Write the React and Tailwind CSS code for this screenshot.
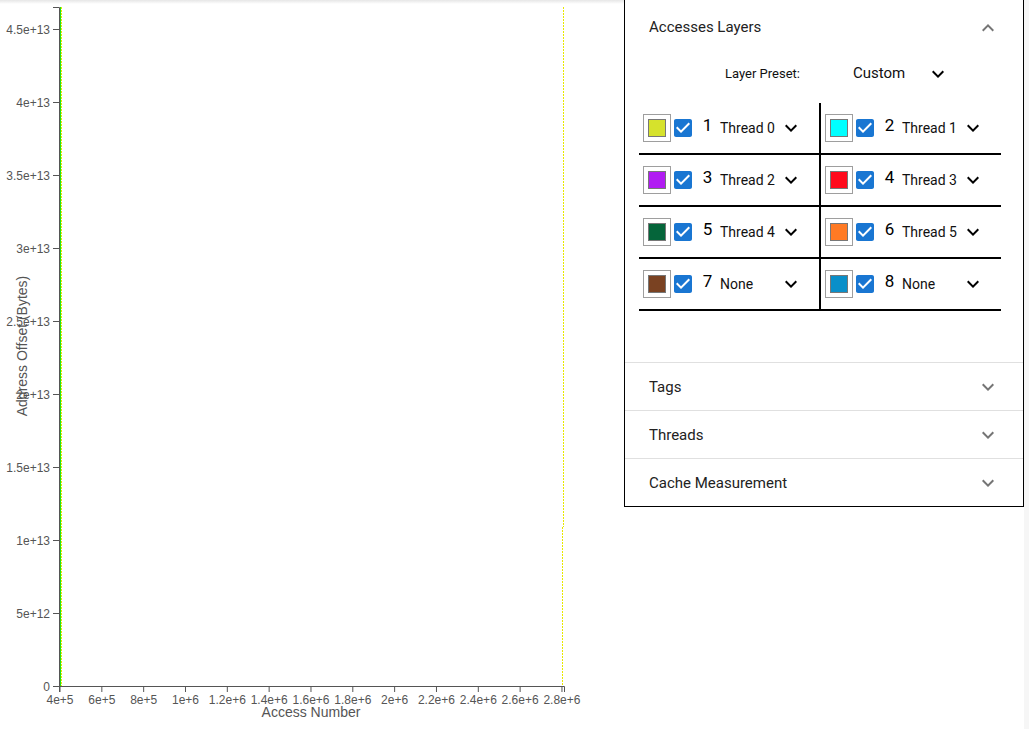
import React from 'react';

const layers = [
  { n: 1, color: '#d6e22c', label: 'Thread 0' },
  { n: 2, color: '#00ffff', label: 'Thread 1' },
  { n: 3, color: '#b11cf2', label: 'Thread 2' },
  { n: 4, color: '#ff0a1c', label: 'Thread 3' },
  { n: 5, color: '#05653a', label: 'Thread 4' },
  { n: 6, color: '#ff7a24', label: 'Thread 5' },
  { n: 7, color: '#7a4222', label: 'None' },
  { n: 8, color: '#0a8fc9', label: 'None' }
];

const yTicks = ['4.5e+13', '4e+13', '3.5e+13', '3e+13', '2.5e+13', '2e+13', '1.5e+13', '1e+13', '5e+12', '0'];
const xTicks = ['4e+5', '6e+5', '8e+5', '1e+6', '1.2e+6', '1.4e+6', '1.6e+6', '1.8e+6', '2e+6', '2.2e+6', '2.4e+6', '2.6e+6', '2.8e+6'];

function Chevron({ up = false, className = '' }) {
  return (
    <svg viewBox="0 0 24 24" className={`h-6 w-6 shrink-0 ${className}`} fill="currentColor" aria-hidden="true">
      {up ? (
        <path d="M12 8l-6 6 1.41 1.41L12 10.83l4.59 4.58L18 14z" />
      ) : (
        <path d="M16.59 8.59 12 13.17 7.41 8.59 6 10l6 6 6-6z" />
      )}
    </svg>
  );
}

function CheckIcon() {
  return (
    <svg viewBox="0 0 24 24" className="h-6 w-6 shrink-0 text-[#1976d2]" fill="currentColor" aria-hidden="true">
      <path d="M19 3H5c-1.11 0-2 .9-2 2v14c0 1.1.89 2 2 2h14c1.11 0 2-.9 2-2V5c0-1.1-.89-2-2-2zm-9 14l-5-5 1.41-1.41L10 14.17l7.59-7.59L19 8l-9 9z" />
    </svg>
  );
}

function Chart() {
  const font = { fontFamily: '"Liberation Sans", Arial, sans-serif' };
  return (
    <svg width="624" height="729" className="block shrink-0" style={font}>
      <defs>
        <linearGradient id="topShade" x1="0" y1="0" x2="0" y2="1">
          <stop offset="0" stopColor="#e6e6e6" />
          <stop offset="1" stopColor="#ffffff" />
        </linearGradient>
      </defs>
      <rect x="0" y="0" width="624" height="4" fill="url(#topShade)" />

      {/* y axis */}
      <path d="M53,7.5H59.5V686.5H53" fill="none" stroke="#555" />
      {yTicks.map((t, i) => {
        const y = 29 + i * 73 + 0.5;
        return (
          <g key={t}>
            <line x1="53" y1={y} x2="59" y2={y} stroke="#555" />
            <text x="50" y={y} dy="0.34em" textAnchor="end" fontSize="12" fill="#555">{t}</text>
          </g>
        );
      })}

      {/* x axis */}
      <path d="M59.5,692V686.5H564.5V692" fill="none" stroke="#555" />
      {xTicks.map((t, i) => {
        const x = 60 + i * 41.83;
        return (
          <g key={t}>
            <line x1={x} y1="686" x2={x} y2="692" stroke="#555" />
            <text x={x} y="704" textAnchor="middle" fontSize="12" fill="#555">{t}</text>
          </g>
        );
      })}

      {/* data lines */}
      <line x1="60.5" y1="7" x2="60.5" y2="686" stroke="#22e01a" strokeWidth="1" />
      <line x1="61.5" y1="7" x2="61.5" y2="686" stroke="#e8e800" strokeWidth="1" strokeDasharray="2 1" />
      <line x1="563.5" y1="7" x2="563.5" y2="527" stroke="#e8e800" strokeWidth="1" strokeDasharray="2 1" />
      <line x1="562.5" y1="527" x2="562.5" y2="686" stroke="#e8e800" strokeWidth="1" strokeDasharray="2 1" />

      <text x="311" y="717" textAnchor="middle" fontSize="14" fill="#555">Access Number</text>
      <text transform="translate(27,346) rotate(-90)" textAnchor="middle" fontSize="14" fill="#555">Address Offset (Bytes)</text>
    </svg>
  );
}

function LayerCell({ layer, left }) {
  return (
    <div className={`flex h-[52px] items-center border-b-2 border-black pl-[4px] ${left ? 'border-r-2' : ''}`}>
      <div className="h-[28px] w-[28px] shrink-0 border border-[#9e9e9e] p-[4px]">
        <div className="h-[18px] w-[18px] border border-[#777]" style={{ backgroundColor: layer.color }} />
      </div>
      <CheckIcon />
      <span className="mb-[5px] w-[25px] shrink-0 text-center text-[17px] text-black">{layer.n}</span>
      <div className="flex w-[83px] items-center justify-between text-[14px] text-[#111]">
        <span className="pt-[1px]">{layer.label}</span>
        <Chevron className="text-black" />
      </div>
    </div>
  );
}

function Panel() {
  return (
    <div className="flex h-[507px] w-[400px] shrink-0 flex-col border-x border-b border-black bg-white font-['Roboto',sans-serif]">
      <div className="h-[363px]">
        <div className="flex h-[55px] items-center justify-between pl-6 pr-[23px]">
          <span className="text-[15px] text-[#222]">Accesses Layers</span>
          <Chevron up className="text-[#757575]" />
        </div>
        <div className="flex h-[37px] items-center pl-[100px]">
          <span className="w-[128px] text-[13px] text-[#111]">Layer Preset:</span>
          <div className="flex w-[97px] items-center justify-between text-[15px] text-[#111]">
            <span>Custom</span>
            <Chevron className="text-black" />
          </div>
        </div>
        <div className="ml-[14px] mt-[11px] grid w-[362px] grid-cols-[182px_180px]">
          {layers.map((l, i) => (
            <LayerCell key={l.n} layer={l} left={i % 2 === 0} />
          ))}
        </div>
      </div>
      {['Tags', 'Threads', 'Cache Measurement'].map((t) => (
        <div key={t} className="flex h-[48px] items-center justify-between border-t border-[#e0e0e0] pl-6 pr-[23px]">
          <span className="pt-[1px] text-[15px] text-[#222]">{t}</span>
          <Chevron className="text-[#757575]" />
        </div>
      ))}
    </div>
  );
}

export default function App() {
  return (
    <div className="flex h-[729px] w-full overflow-hidden bg-white">
      <Chart />
      <Panel />
      <div className="h-full flex-1 bg-[#f6f6f6]" />
    </div>
  );
}
